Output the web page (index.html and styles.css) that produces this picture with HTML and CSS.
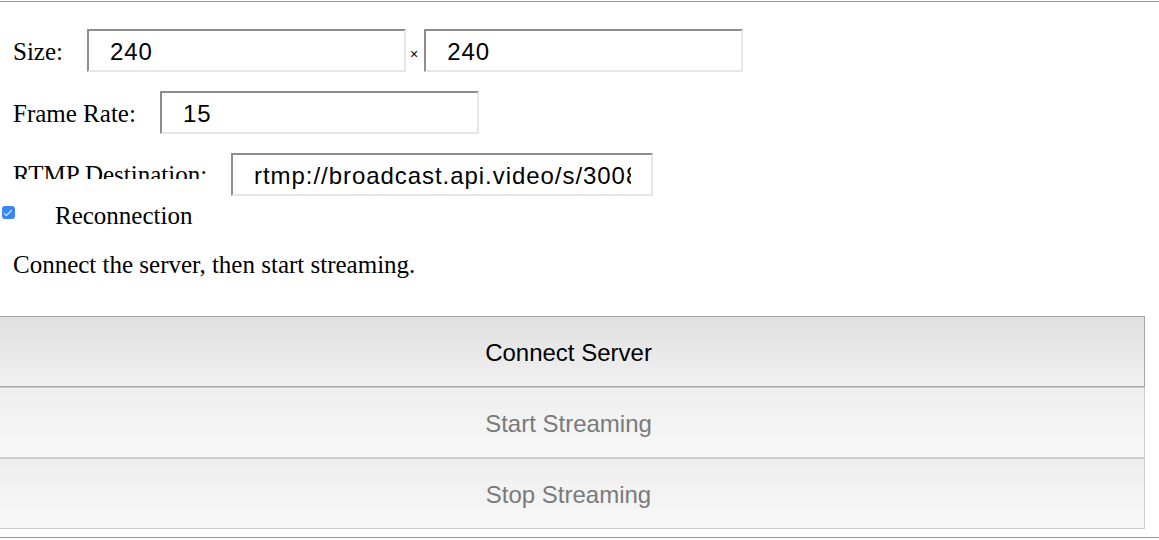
FILE: index.html
```html
<!DOCTYPE html>
<html lang="en">
<head>
<meta charset="utf-8">
<title>RTMP Streaming</title>
<link rel="stylesheet" href="styles.css">
</head>
<body>
<div class="rule rule-top"></div>
<form class="form">
  <div class="row">
    <label class="lbl lbl-size" for="width">Size:</label>
    <input class="field" id="width" type="text" value="240">
    <span class="times">×</span>
    <input class="field" id="height" type="text" value="240">
  </div>
  <div class="row">
    <label class="lbl lbl-fps" for="fps">Frame Rate:</label>
    <input class="field" id="fps" type="text" value="15">
  </div>
  <div class="row">
    <label class="lbl lbl-rtmp" for="rtmp">RTMP Destination:</label>
    <input class="field field-wide" id="rtmp" type="text" value="rtmp://broadcast.api.video/s/30087931-229e-42cf-b5f9-e91bcc1f7332">
  </div>
</form>
<div class="check-row">
  <input class="check" id="reconnect" type="checkbox" checked>
  <label class="check-label" for="reconnect">Reconnection</label>
</div>
<p class="status">Connect the server, then start streaming.</p>
<div class="buttons">
  <button class="btn btn-active" type="button">Connect Server</button>
  <button class="btn btn-disabled" type="button" disabled>Start Streaming</button>
  <button class="btn btn-disabled" type="button" disabled>Stop Streaming</button>
</div>
<div class="rule rule-bottom"></div>
</body>
</html>
```
FILE: styles.css
```css
html, body {
  margin: 0;
  padding: 0;
  background: #ffffff;
}

body {
  font-family: "Liberation Serif", "Times New Roman", serif;
  font-size: 25px;
  color: #000000;
  width: 1159px;
  overflow: hidden;
}

.rule {
  height: 0;
  border-top: 1px solid #9a9a9a;
}

.rule-top {
  margin-top: 1px;
}

.rule-bottom {
  margin-top: 8px;
}

.form {
  margin: 27px 0 0 0;
  padding-left: 13px;
}

.row {
  display: flex;
  align-items: center;
  height: 43px;
  margin-bottom: 19px;
}

.row:last-child {
  margin-bottom: 0;
}

.lbl {
  flex: none;
  line-height: 28px;
  padding-top: 2px;
  white-space: nowrap;
}

.lbl-size {
  width: 74px;
}

.lbl-fps {
  width: 147px;
}

.lbl-rtmp {
  width: 218px;
  align-self: flex-start;
  box-sizing: content-box;
  padding: 8px 0 0 0;
  height: 18px;
  overflow: hidden;
}

.field {
  flex: none;
  box-sizing: border-box;
  width: 319px;
  height: 43px;
  margin: 0;
  padding: 2px 20px 0 21px;
  border-style: solid;
  border-width: 2px;
  border-color: #8d8d8d #e6e6e6 #e6e6e6 #8d8d8d;
  background: #ffffff;
  font-family: "Liberation Sans", Arial, sans-serif;
  font-size: 24px;
  letter-spacing: 0.95px;
  color: #000000;
  outline: none;
}

.field-wide {
  width: 422px;
}

.times {
  flex: none;
  align-self: flex-end;
  margin: 0 6px 10px 4px;
  font-family: "Liberation Sans", Arial, sans-serif;
  font-size: 14px;
  line-height: 16px;
}

.check-row {
  display: flex;
  align-items: flex-start;
  margin-top: 3px;
}

.check {
  appearance: none;
  -webkit-appearance: none;
  flex: none;
  position: relative;
  width: 13px;
  height: 13px;
  margin: 7px 40px 0 2px;
  border-radius: 3px;
  background: #3a86f7;
}

.check::after {
  content: "";
  position: absolute;
  left: 4px;
  top: 1.5px;
  width: 3px;
  height: 6.5px;
  border-right: 1.6px solid #ffffff;
  border-bottom: 1.6px solid #ffffff;
  transform: rotate(45deg);
}

.check-label {
  padding-top: 3px;
  line-height: 28px;
}

.status {
  margin: 21px 0 0 13px;
  line-height: 28px;
}

.buttons {
  margin-top: 37px;
  display: flex;
  flex-direction: column;
}

.btn {
  display: block;
  box-sizing: border-box;
  width: 1145px;
  height: 71px;
  margin: 0;
  padding: 2px 7px 0 0;
  border-style: solid;
  border-width: 1px 1px 1px 0;
  font-family: "Liberation Sans", Arial, sans-serif;
  font-size: 24px;
  text-align: center;
}

.btn-active {
  border-color: #a6a6a6;
  background: linear-gradient(#e0e0e0, #f1f1f1);
  color: #000000;
}

.btn-disabled {
  border-color: #cbcbcb;
  background: linear-gradient(#eeeeee, #f8f8f8);
  color: #7a7a7a;
}
```
